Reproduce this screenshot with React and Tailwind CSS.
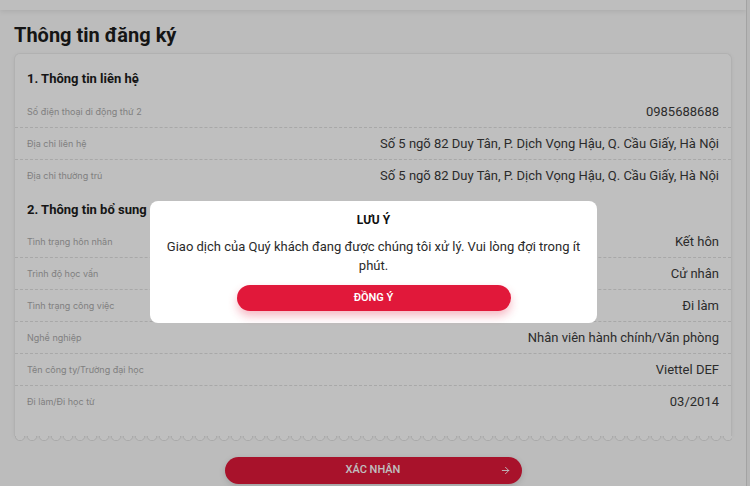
import { ArrowRight } from 'lucide-react'

const contact = [
  { label: 'Số điện thoại di động thứ 2', value: '0985688688' },
  { label: 'Địa chỉ liên hệ', value: 'Số 5 ngõ 82 Duy Tân, P. Dịch Vọng Hậu, Q. Cầu Giấy, Hà Nội' },
  { label: 'Địa chỉ thường trú', value: 'Số 5 ngõ 82 Duy Tân, P. Dịch Vọng Hậu, Q. Cầu Giấy, Hà Nội' },
]

const extra = [
  { label: 'Tình trạng hôn nhân', value: 'Kết hôn' },
  { label: 'Trình độ học vấn', value: 'Cử nhân' },
  { label: 'Tình trạng công việc', value: 'Đi làm' },
  { label: 'Nghề nghiệp', value: 'Nhân viên hành chính/Văn phòng' },
  { label: 'Tên công ty/Trường đại học', value: 'Viettel DEF' },
  { label: 'Đi làm/Đi học từ', value: '03/2014' },
]

function Rows({ items }) {
  return (
    <div>
      {items.map((r, i) => (
        <div
          key={r.label}
          className={`flex items-center justify-between h-[32px] px-[12px] ${i < items.length - 1 ? 'border-b border-dashed border-[#e0e0e0]' : ''}`}
        >
          <span className="font-['Inter',sans-serif] text-[9px] text-[#ababab]">{r.label}</span>
          <span className="text-[13px] text-[#3a3a3a]">{r.value}</span>
        </div>
      ))}
    </div>
  )
}

export default function App() {
  return (
    <div className="relative h-[486px] w-[750px] overflow-hidden bg-[#fbfbfb] font-['Roboto','Inter',sans-serif] flex">
      <div className="flex-1 flex flex-col">
        {/* top bar */}
        <div className="h-[10px] bg-[#fefefe] shadow-[0_2px_5px_rgba(0,0,0,0.08)]" />

        <h1 className="px-[14px] pt-[12px] text-[20px] font-bold text-[#1c1c1c] leading-[26px]">Thông tin đăng ký</h1>

        <div className="mx-[14px] mt-[5px]">
          <div className="bg-white rounded-t-[6px] border border-b-0 border-[#ececec] shadow-[0_1px_4px_rgba(0,0,0,0.06)] pt-[15px] pb-[18px]">
            <h2 className="px-[12px] text-[13px] font-bold text-[#1c1c1c] leading-[20px]">1. Thông tin liên hệ</h2>
            <div className="mt-[7px]">
              <Rows items={contact} />
            </div>
            <h2 className="px-[12px] mt-[8px] text-[13px] font-bold text-[#1c1c1c] leading-[20px]">2. Thông tin bổ sung</h2>
            <div className="mt-[6px]">
              <Rows items={extra} />
            </div>
          </div>
          {/* scalloped edge */}
          <div className="h-[5px] bg-[radial-gradient(circle_at_6px_0,#ffffff_4px,#e2e2e2_4.5px,transparent_5.5px)] bg-[length:12px_5px] bg-repeat-x" />
        </div>

        <div className="flex justify-center mt-[16px]">
          <button className="relative w-[297px] h-[27px] rounded-full bg-[#e1183a] text-white text-[11px] font-medium shadow-[0_2px_6px_rgba(0,0,0,0.15)]">
            XÁC NHẬN
            <ArrowRight className="absolute right-[11px] top-[8px]" size={11} strokeWidth={2} />
          </button>
        </div>
      </div>
      <div className="w-[4px] border-l border-[#dadada] bg-[#f3f3f3]" />

      {/* overlay */}
      <div className="absolute inset-0 bg-black/25" />

      {/* dialog */}
      <div className="absolute left-[150px] top-[201px] w-[447px] bg-white rounded-[8px] px-[14px] pt-[12px] pb-[12px] text-center">
        <div className="text-[12px] font-bold text-[#111] leading-[14px]">LƯU Ý</div>
        <p className="mt-[10px] text-[13px] leading-[19px] text-[#2a2a2a]">
          Giao dịch của Quý khách đang được chúng tôi xử lý. Vui lòng đợi trong ít phút.
        </p>
        <div className="flex justify-center mt-[10px]">
          <button className="w-[274px] h-[26px] rounded-full bg-[#e1183a] text-white text-[11px] font-semibold shadow-[0_5px_10px_rgba(225,24,58,0.3)]">
            ĐỒNG Ý
          </button>
        </div>
      </div>
    </div>
  )
}
